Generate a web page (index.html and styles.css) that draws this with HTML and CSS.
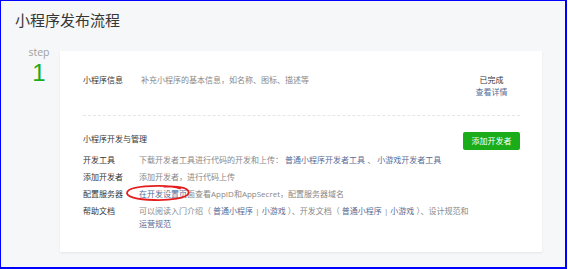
FILE: index.html
```html
<!DOCTYPE html>
<html lang="zh-CN">
<head>
<meta charset="utf-8">
<title>小程序发布流程</title>
<link rel="stylesheet" href="styles.css">
</head>
<body>
<div class="frame">
  <h1 class="title">小程序发布流程</h1>
  <div class="main">
    <div class="step">
      <div class="step-label">step</div>
      <div class="step-num">1</div>
    </div>
    <div class="card">
      <div class="info-row">
        <div class="label label-wide">小程序信息</div>
        <div class="desc">补充小程序的基本信息，如名称、图标、描述等</div>
        <div class="status">
          <div class="status-text">已完成</div>
          <a class="link">查看详情</a>
        </div>
      </div>
      <div class="divider"></div>
      <div class="dev-head">
        <div class="section-title">小程序开发与管理</div>
        <a class="btn">添加开发者</a>
      </div>
      <div class="rows">
        <div class="label">开发工具</div>
        <div class="desc">下载开发者工具进行代码的开发和上传： <a class="link">普通小程序开发者工具</a> 、 <a class="link">小游戏开发者工具</a></div>
        <div class="label">添加开发者</div>
        <div class="desc">添加开发者，进行代码上传</div>
        <div class="label">配置服务器</div>
        <div class="desc mark-host"><a class="link">在开发设置页</a>面查看AppID和AppSecret，配置服务器域名<svg class="mark" viewBox="0 0 68 18" width="68" height="18"><path d="M40 2.5 C58 1.5 66 5 64.5 9.5 C63 14 46 16.5 30 16 C12 15.5 2 12.5 3 8.5 C4 4 18 2 34 1.8 C44 1.7 52 2.8 56 4.5" fill="none" stroke="#e41e1e" stroke-width="1.8" stroke-linecap="round"/></svg></div>
        <div class="label">帮助文档</div>
        <div class="desc desc-wrap">可以阅读入门介绍（ <a class="link">普通小程序</a> | <a class="link">小游戏</a> ）、开发文档（ <a class="link">普通小程序</a> | <a class="link">小游戏</a> ）、设计规范和<br><a class="link">运营规范</a></div>
      </div>
    </div>
  </div>
</div>
</body>
</html>
```

FILE: styles.css
```css
html, body {
  margin: 0;
  padding: 0;
  background: #ffffff;
}

body {
  font-family: "Open Sans", "Noto Sans CJK SC", sans-serif;
  color: #353535;
}

.frame {
  box-sizing: border-box;
  width: 567px;
  height: 269px;
  border: 1px solid #0000ff;
  border-right-width: 2px;
  border-bottom-width: 2px;
  background: #f6f7f9;
  padding: 9px 0 0 14px;
  overflow: hidden;
}

.title {
  margin: 0;
  font-size: 15px;
  line-height: 20px;
  font-weight: normal;
  color: #353535;
}

.main {
  display: flex;
  align-items: flex-start;
  margin-top: 21px;
}

.step {
  width: 42px;
  padding-left: 3px;
  margin-top: -5px;
  text-align: center;
}

.step-label {
  font-size: 10.5px;
  line-height: 12px;
  color: #a0a0a0;
}

.step-num {
  font-family: "Liberation Sans", sans-serif;
  font-size: 24px;
  line-height: 29px;
  color: #1aad19;
}

.card {
  box-sizing: border-box;
  width: 482px;
  height: 201px;
  background: #ffffff;
  box-shadow: 0 1px 2px rgba(0, 0, 0, 0.08);
  padding: 23px 22px 0 23px;
  font-size: 8px;
}

.info-row {
  display: flex;
  align-items: flex-start;
  line-height: 12px;
}

.label {
  color: #353535;
  width: 56px;
}

.label-wide {
  width: 58px;
}

.desc {
  color: #888888;
}

.info-row .desc {
  flex: 1;
}

.status {
  width: 57px;
  text-align: center;
  display: flex;
  flex-direction: column;
  align-items: center;
}

.status-text {
  color: #353535;
}

.link {
  color: #576b95;
  text-decoration: none;
}

.divider {
  margin-top: 17px;
  border-top: 1px dashed #e6e6e6;
}

.dev-head {
  display: flex;
  justify-content: space-between;
  align-items: flex-start;
  margin-top: 16px;
}

.section-title {
  line-height: 12px;
  margin-top: 1px;
  color: #353535;
}

.btn {
  width: 57px;
  height: 18px;
  line-height: 18px;
  text-align: center;
  color: #ffffff;
  background: #1aad19;
  border-radius: 2px;
}

.rows {
  display: grid;
  grid-template-columns: 56px 1fr;
  row-gap: 4px;
  line-height: 13px;
  margin-top: 3px;
}

.desc-wrap {
  max-width: 360px;
}

.mark-host {
  position: relative;
}

.mark {
  position: absolute;
  left: -15px;
  top: -3px;
}
```
